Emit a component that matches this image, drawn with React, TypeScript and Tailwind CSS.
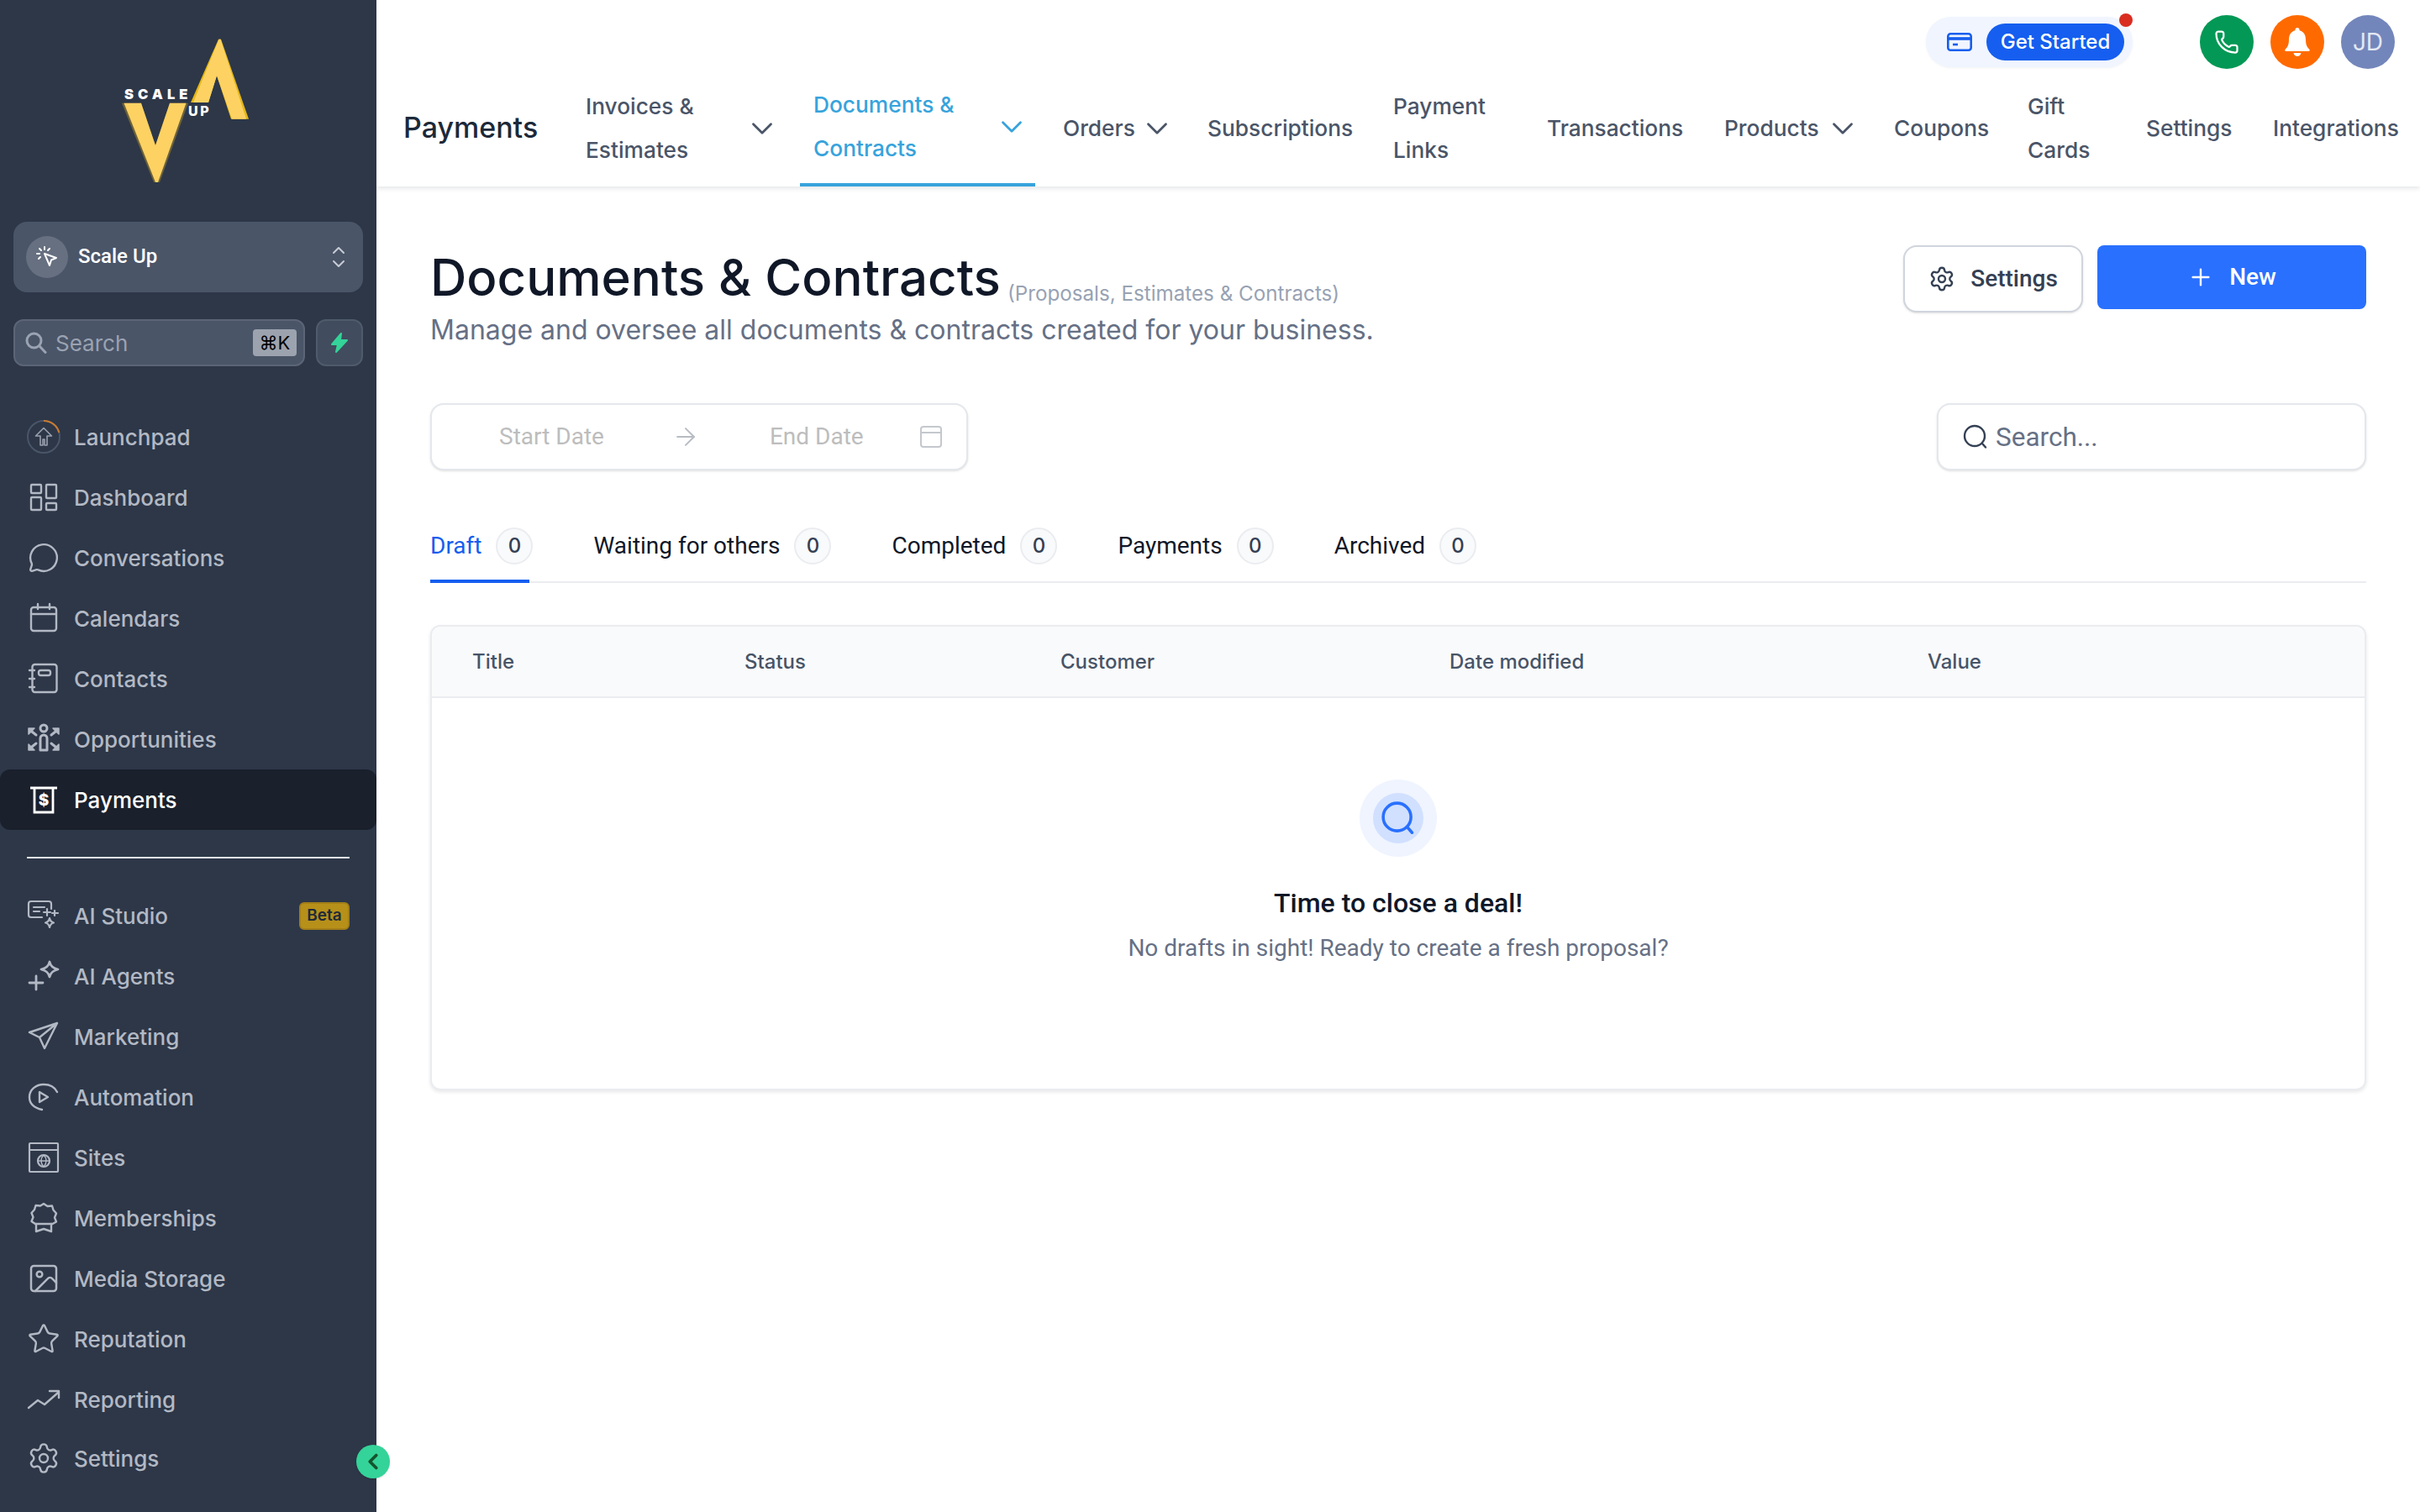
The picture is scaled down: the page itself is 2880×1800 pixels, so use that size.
import React from "react";
import { ChevronDown, ChevronLeft, ChevronUp, Plus, Settings, MessageCircle, Star, Image as ImageIcon, Phone, ArrowRight } from "lucide-react";

const S = ({ children, fill = "none", w = 2.4 }: { children: React.ReactNode; fill?: string; w?: number }) => (
  <svg width="40" height="40" viewBox="0 0 40 40" fill={fill} stroke="currentColor" strokeWidth={w} strokeLinecap="round" strokeLinejoin="round">
    {children}
  </svg>
);

const icons: Record<string, React.ReactNode> = {
  Launchpad: (
    <svg width="40" height="40" viewBox="0 0 40 40" fill="none" stroke="currentColor" strokeWidth="2">
      <circle cx="20" cy="20" r="19" stroke="#4a5568" />
      <path d="M20 1a19 19 0 0 1 18.400 14" stroke="#c77a30" />
      <path d="M20 9.500 10.500 19h5.500v11h3v-7h2v7h3V19h5.500z" strokeWidth="1.600" strokeLinejoin="round" stroke="#9aa1ae" />
    </svg>
  ),
  Dashboard: (
    <S>
      <rect x="5" y="5" width="12" height="10" rx="1" />
      <rect x="23" y="5" width="12" height="16" rx="1" />
      <rect x="5" y="20" width="12" height="15" rx="1" />
      <rect x="23" y="27" width="12" height="8" rx="1" />
    </S>
  ),
  Conversations: <MessageCircle size={38} strokeWidth={1.5} />,
  Calendars: (
    <S>
      <rect x="5" y="7" width="30" height="28" rx="3" />
      <path d="M5 15h30M13 3v6M27 3v6" />
    </S>
  ),
  Contacts: (
    <S>
      <rect x="6.500" y="3" width="29" height="33" rx="3" />
      <rect x="14" y="10" width="14" height="6" rx="2.500" />
      <path d="M3 10h6M3 20h6M3 30h6" />
    </S>
  ),
  Opportunities: (
    <S w={3}>
      <circle cx="20" cy="7" r="4" />
      <path d="M16 33V19a4 4 0 0 1 8 0v14z" />
      <path d="M2 7h7l-7 7zM38 7h-7l7 7zM2 33h7l-7-7zM38 33h-7l7-7z" fill="currentColor" strokeWidth="1.500" />
      <path d="M6 11l5 4M34 11l-5 4M6 29l5-4M34 29l-5-4" />
    </S>
  ),
  Payments: (
    <svg width="40" height="40" viewBox="0 0 40 40" fill="none" stroke="currentColor" strokeWidth="2.800">
      <path d="M4 6h32M9 6v29h22V6" />
      <text x="20" y="27" textAnchor="middle" fontSize="19" fontWeight="800" fontFamily="Inter, sans-serif" fill="currentColor" stroke="none">$</text>
    </svg>
  ),
  "AI Studio": (
    <S w={2.200}>
      <path d="M18 22H5a3 3 0 0 1-3-3V6a3 3 0 0 1 3-3h21a3 3 0 0 1 3 3v6" />
      <path d="M8 10h13M8 15h7" />
      <path d="M24 12v8M20 16h8M33 14v6M30 17h7" />
      <path d="M27 23c.7 3.500 2 4.800 5 5.500-3 .7-4.300 2-5 5.500-.7-3.500-2-4.800-5-5.500 3-.7 4.300-2 5-5.500z" />
    </S>
  ),
  "AI Agents": (
    <S w={2.800}>
      <path d="M27 3c1 5 3.500 7.500 10 9-6.500 1.500-9 4-10 9-1-5-3.500-7.500-10-9 6.500-1.500 9-4 10-9z" />
      <path d="M11 20v16M3 28h16" />
    </S>
  ),
  Marketing: (
    <S>
      <path d="M36 4 3 15l12 6 6 13zM36 4 15 21" />
    </S>
  ),
  Automation: (
    <S>
      <path d="M36 14C33 8 27 5 20 5 11 5 3 11 3 20c0 8 6 13 15 15" />
      <path d="M15 14v12l10-6z" />
    </S>
  ),
  Sites: (
    <S w={2.200}>
      <rect x="3" y="3" width="34" height="34" rx="1" />
      <path d="M3 11h34" />
      <circle cx="20" cy="24" r="7" />
      <path d="M13 24h14M20 17c-4 4-4 10 0 14M20 17c4 4 4 10 0 14" strokeWidth="1.400" />
    </S>
  ),
  Memberships: (
    <S>
      <path d="M20 3l4.500 3 5.500-.5 1.500 5 3.500 4-2 5 2 5-4.500 2.500H10L5.500 24l2-5-2-5 3.500-4 1.500-5 5.500.5z" />
      <path d="M11 27v9l9-3 9 3v-9" />
    </S>
  ),
  "Media Storage": <ImageIcon size={40} strokeWidth={1.5} />,
  Reputation: <Star size={40} strokeWidth={1.450} />,
  Reporting: (
    <S>
      <path d="M2 30l11-9 8 5L37 12M27 10h11v8" />
    </S>
  ),
  Settings: <Settings size={40} strokeWidth={1.450} />,
};

const Logo = () => (
  <svg width="160" height="180" viewBox="140 42 160 180">
    <polygon points="145,122.700 168,122.700 185,173 202,122.700 224,122.700 190,217 183,217" fill="#6e6238" />
    <polygon points="147.500,122.700 168,122.700 185,173 202,122.700 221.500,122.700 188,217 185,217" fill="#fdd263" />
    <polygon points="260,46.700 263,46.700 296,141.700 275,141.700 258,90 248,122 227,122" fill="#e5b818" />
    <polygon points="260.500,46.700 262.500,46.700 293,141.700 276,141.700 258,90 248,122 230,122" fill="#fdd263" />
    <text x="148" y="118" fill="#fff" fontFamily="Inter, sans-serif" fontWeight="900" fontSize="16.500" letterSpacing="5">SCALE</text>
    <text x="224" y="138" fill="#fff" fontFamily="Inter, sans-serif" fontWeight="800" fontSize="16" letterSpacing="2.500">UP</text>
  </svg>
);

const NavItem = ({ label, active }: { label: string; active?: boolean }) => (
  <div
    className={
      active
        ? "flex h-[72px] items-center gap-4 rounded-xl bg-[#1a202c] pl-8 pr-8 text-white"
        : "flex h-[72px] items-center gap-4 pl-8 pr-8 text-[#b3b9c4]"
    }
  >
    <span className="flex h-10 w-10 items-center justify-center">{icons[label]}</span>
    <span className="pt-[1px] text-[26px] font-medium leading-9">{label}</span>
    {label === "AI Studio" && (
      <span className="ml-auto flex h-[33px] w-[60px] items-center justify-center rounded-md border-2 border-[#a37f17] bg-[#b7901a] text-[19px] font-semibold text-[#1f2a3a]">
        Beta
      </span>
    )}
  </div>
);

const tabs = [
  { cls: "w-[271px] pr-[24px]", l: ["Invoices &", "Estimates"], chev: true },
  { cls: "w-[280px] pr-[7px] mr-[17px] border-b-4 border-[#37a3dc] text-[#37a3dc]", l: ["Documents &", "Contracts"], chev: true },
  { cls: "w-[172px] pr-[23px]", l: ["Orders"], chev: true },
  { cls: "w-[221px]", l: ["Subscriptions"] },
  { cls: "w-[183px]", l: ["Payment", "Links"] },
  { cls: "w-[211px]", l: ["Transactions"] },
  { cls: "w-[202px] pr-[24px]", l: ["Products"], chev: true },
  { cls: "w-[159px]", l: ["Coupons"] },
  { cls: "w-[141px]", l: ["Gift", "Cards"] },
  { cls: "w-[151px]", l: ["Settings"] },
  { cls: "w-[180px]", l: ["Integrations"] },
];

const DocTabs = [
  { t: "Draft", a: true },
  { t: "Waiting for others" },
  { t: "Completed" },
  { t: "Payments" },
  { t: "Archived" },
];

const SearchGlyph = ({ cls, w = 2.400 }: { cls: string; w?: number }) => (
  <svg className={cls} viewBox="0 0 32 32" fill="none" stroke="currentColor" strokeWidth={w} strokeLinecap="round">
    <circle cx="15" cy="15" r="12" />
    <path d="M24 24l4 4.500" />
  </svg>
);

export default function App() {
  return (
    <div className="flex h-[1800px] w-[2880px] overflow-hidden bg-white [font-family:Inter,sans-serif]">
      <aside className="relative flex h-full w-[448px] shrink-0 flex-col bg-[#2d3748]">
        <div className="flex h-[264px] items-start justify-center pt-[42px] pr-[8px]">
          <Logo />
        </div>
        <div className="mx-4 flex h-[84px] items-center rounded-2xl bg-[#4a5568] pl-[15px] pr-[17px] text-white">
          <span className="flex h-[50px] w-[50px] items-center justify-center rounded-full bg-[#667080]">
            <svg width="28" height="28" viewBox="0 0 28 28" fill="none" stroke="#fff" strokeWidth="2" strokeLinecap="round" strokeLinejoin="round">
              <path d="M11 10l14 5-6 2.500L17 24z" />
              <path d="M5 4l2 2M11 2v3M17 4l-2 2M2 10h3M4 16l2-2" />
            </svg>
          </span>
          <span className="ml-3 -mt-[2px] text-[24px] font-medium [font-family:Roboto,sans-serif]">Scale Up</span>
          <span className="ml-auto flex flex-col text-[#c7ccd4]">
            <ChevronUp size={24} strokeWidth={2} className="-mb-1" />
            <ChevronDown size={24} strokeWidth={2} className="-mt-1" />
          </span>
        </div>
        <div className="mx-4 mt-8 flex h-14 gap-[13px]">
          <div className="flex h-14 w-[347px] items-center rounded-xl border-2 border-[#5b6576] bg-[#4a5568] pl-[12px] pr-[8px]">
            <svg width="26" height="26" viewBox="0 0 26 26" fill="none" stroke="#9aa3b2" strokeWidth="3" strokeLinecap="round">
              <circle cx="10.500" cy="10.500" r="8.500" />
              <path d="M17 17l7 7.500" />
            </svg>
            <span className="ml-[10px] text-[26px] text-[#9aa3b2]">Search</span>
            <span className="ml-auto flex h-8 w-[52px] items-center justify-center rounded bg-[#9ca3af] text-[22px] text-black">⌘K</span>
          </div>
          <div className="flex h-14 w-14 items-center justify-center rounded-xl border-2 border-[#4f5a6b] bg-[#414c5e]">
            <svg width="24" height="28" viewBox="0 0 24 28" fill="#34d399" stroke="#34d399" strokeWidth="2" strokeLinejoin="round">
              <path d="M14 3 3 16h7l-2 9 13-14h-8z" />
            </svg>
          </div>
        </div>
        <nav className="mt-12 flex flex-col">
          {["Launchpad", "Dashboard", "Conversations", "Calendars", "Contacts", "Opportunities"].map((l) => (
            <NavItem key={l} label={l} />
          ))}
          <NavItem label="Payments" active />
        </nav>
        <div className="mx-8 mt-8 h-[2px] bg-[#e2e8f0]" />
        <nav className="mt-8 flex flex-col">
          {["AI Studio", "AI Agents", "Marketing", "Automation", "Sites", "Memberships", "Media Storage", "Reputation", "Reporting"].map((l) => (
            <NavItem key={l} label={l} />
          ))}
          <div className="-mt-0.5">
            <NavItem label="Settings" />
          </div>
        </nav>
        <button className="absolute left-[424px] top-[1720px] flex h-10 w-10 items-center justify-center rounded-full bg-[#34d399] text-[#14532d] shadow">
          <ChevronLeft size={30} strokeWidth={3} />
        </button>
      </aside>

      <main className="flex min-w-0 flex-1 flex-col">
        <header className="h-[222px] shrink-0 bg-white shadow-[0_2px_6px_rgba(16,24,40,0.12)]">
          <div className="flex h-[82px] items-start pr-[30px] pt-[18px]">
            <div className="relative ml-auto mr-[80px] mt-[2px] flex h-[60px] w-[246px] items-center rounded-[30px] bg-[#f0f5ff] pl-[25px] shadow-[0_1px_3px_rgba(16,24,40,0.05)]">
              <svg width="30" height="22" viewBox="0 0 30 22" fill="none" stroke="#155eef" strokeWidth="2.600">
                <rect x="1.300" y="1.300" width="27.400" height="19.400" rx="3" />
                <path d="M1.300 7h27.400" strokeWidth="3.600" />
                <path d="M7 14h6" />
              </svg>
              <span className="ml-[17px] flex h-11 w-[164px] items-center justify-center rounded-full bg-[#155eef] text-[24px] font-medium text-white">Get Started</span>
              <span className="absolute left-[230px] top-[-4px] h-4 w-4 rounded-full bg-[#d92d20]" />
            </div>
            <div className="flex gap-5">
              <span className="flex h-16 w-16 items-center justify-center rounded-full bg-[#039855] text-white">
                <Phone size={30} strokeWidth={1.800} />
              </span>
              <span className="flex h-16 w-16 items-center justify-center rounded-full bg-[#ff6a00]">
                <svg width="32" height="36" viewBox="0 0 32 36" fill="#fff">
                  <path d="M16 1a2.500 2.500 0 0 1 2.500 3.200C23.500 5.400 26 9.500 26 15c0 6 1.500 9 4.500 12 .7.800.2 2-1 2H2.500c-1.200 0-1.700-1.200-1-2C4.500 24 6 21 6 15c0-5.500 2.500-9.600 7.500-10.800A2.500 2.500 0 0 1 16 1z" />
                  <path d="M11.500 31h9c-.5 2.500-2.300 4-4.500 4s-4-1.500-4.500-4z" />
                </svg>
              </span>
              <span className="flex h-16 w-16 items-center justify-center rounded-full bg-[#7386bb] text-[28px] text-[#e4e8f4]">JD</span>
            </div>
          </div>
          <div className="flex h-[140px] items-center">
            <div className="ml-8 w-[201px] text-[34px] font-medium leading-[44px] text-[#1d2939]">Payments</div>
            {tabs.map((t) => (
              <div key={t.l[0]} className={`flex h-full items-center pl-4 pt-[1px] text-[26.300px] font-medium leading-[52px] text-[#4a5568] ${t.cls}`}>
                <span className="whitespace-nowrap">
                  {t.l.map((x) => (
                    <span key={x} className="block">
                      {x}
                    </span>
                  ))}
                </span>
                {t.chev && <ChevronDown size={42} strokeWidth={1.600} className="ml-auto" />}
              </div>
            ))}
          </div>
        </header>

        <section className="px-16 pt-[70px]">
          <div className="flex items-start justify-between">
            <div>
              <div className="flex h-[76px] items-end">
                <h1 className="text-[60px] font-medium leading-[76px] text-[#101828]">Documents &amp; Contracts</h1>
                <span className="mb-[2px] ml-2 text-[24.200px] leading-8 text-[#98a2b3]">(Proposals, Estimates &amp; Contracts)</span>
              </div>
              <p className="mt-[5px] text-[32px] leading-10 text-[#667085]">Manage and oversee all documents &amp; contracts created for your business.</p>
            </div>
            <div className="flex items-start gap-[17px]">
              <button className="flex h-20 w-[214px] items-center justify-center gap-[18px] rounded-2xl border-2 border-[#d0d5dd] bg-white text-[28px] font-medium text-[#344054] shadow-sm [font-family:Roboto,sans-serif]">
                <Settings size={32} strokeWidth={1.800} />
                Settings
              </button>
              <button className="flex h-[76px] w-[320px] items-center justify-center gap-[18px] rounded-lg bg-[#2970ff] text-[28px] font-medium text-white [font-family:Roboto,sans-serif]">
                <Plus size={32} strokeWidth={1.800} />
                New
              </button>
            </div>
          </div>

          <div className="mt-[67px] flex h-20 items-center justify-between">
            <div className="flex h-20 w-[640px] items-center rounded-2xl border-2 border-[#e4e7ec] bg-white pl-[80px] text-[28px] text-[#bdbdbd] shadow-sm [font-family:Roboto,sans-serif]">
              <span>Start Date</span>
              <ArrowRight size={34} strokeWidth={1.400} className="ml-[80px] text-[#b8bcc4]" />
              <span className="ml-[83px]">End Date</span>
              <svg width="28" height="28" viewBox="0 0 28 28" fill="none" stroke="#c4c8ce" strokeWidth="2" className="ml-[66px]">
                <rect x="2" y="2" width="24" height="24" rx="3" />
                <path d="M2 9h24" />
              </svg>
            </div>
            <div className="flex h-20 w-[511px] items-center rounded-2xl border-2 border-[#e4e7ec] bg-white pl-[28px] text-[#344054] shadow-sm">
              <SearchGlyph cls="h-8 w-8" />
              <span className="ml-[8px] pt-[2px] text-[31.500px] text-[#667085] [font-family:Roboto,sans-serif]">Search...</span>
            </div>
          </div>

          <div className="relative mt-[52px] flex h-[82px] gap-[72px] border-b-2 border-[#eaecf0] pt-[16px]">
            {DocTabs.map((t) => (
              <div key={t.t} className="flex h-11 items-center gap-[17px]">
                <span className={t.a ? "text-[28px] text-[#155eef] [font-family:Roboto,sans-serif]" : "text-[28px] text-[#101828] [font-family:Roboto,sans-serif]"}>{t.t}</span>
                <span className="flex h-11 w-11 items-center justify-center rounded-full border-2 border-[#eaecf0] bg-[#f9fafb] text-[24px] font-medium text-[#344054]">0</span>
              </div>
            ))}
            <span className="absolute bottom-[-2px] left-0 h-1 w-[118px] bg-[#155eef]" />
          </div>

          <div className="mt-[50px] h-[554px] rounded-xl border-2 border-[#eaecf0] bg-white shadow-[0_2px_4px_rgba(16,24,40,0.1)]">
            <div className="grid h-[85px] grid-cols-[324px_376px_463px_569px_1fr] items-center rounded-t-xl border-b-2 border-[#eaecf0] bg-[#f9fafb] pl-12 text-[24px] font-medium text-[#475467]">
              <span>Title</span>
              <span>Status</span>
              <span>Customer</span>
              <span>Date modified</span>
              <span>Value</span>
            </div>
            <div className="flex flex-col items-center pt-[97px]">
              <span className="flex h-[92px] w-[92px] items-center justify-center rounded-full bg-[#eff4ff]">
                <span className="flex h-[60px] w-[60px] items-center justify-center rounded-full bg-[#d1e0ff] text-[#2970ff]">
                  <SearchGlyph cls="h-11 w-11 shrink-0" w={2.600} />
                </span>
              </span>
              <div className="mt-[35px] text-[32px] font-medium leading-10 text-[#101828] [font-family:Roboto,sans-serif]">Time to close a deal!</div>
              <div className="mt-[16px] text-[28px] leading-9 text-[#667085] [font-family:Roboto,sans-serif]">No drafts in sight! Ready to create a fresh proposal?</div>
            </div>
          </div>
        </section>
      </main>
    </div>
  );
}
